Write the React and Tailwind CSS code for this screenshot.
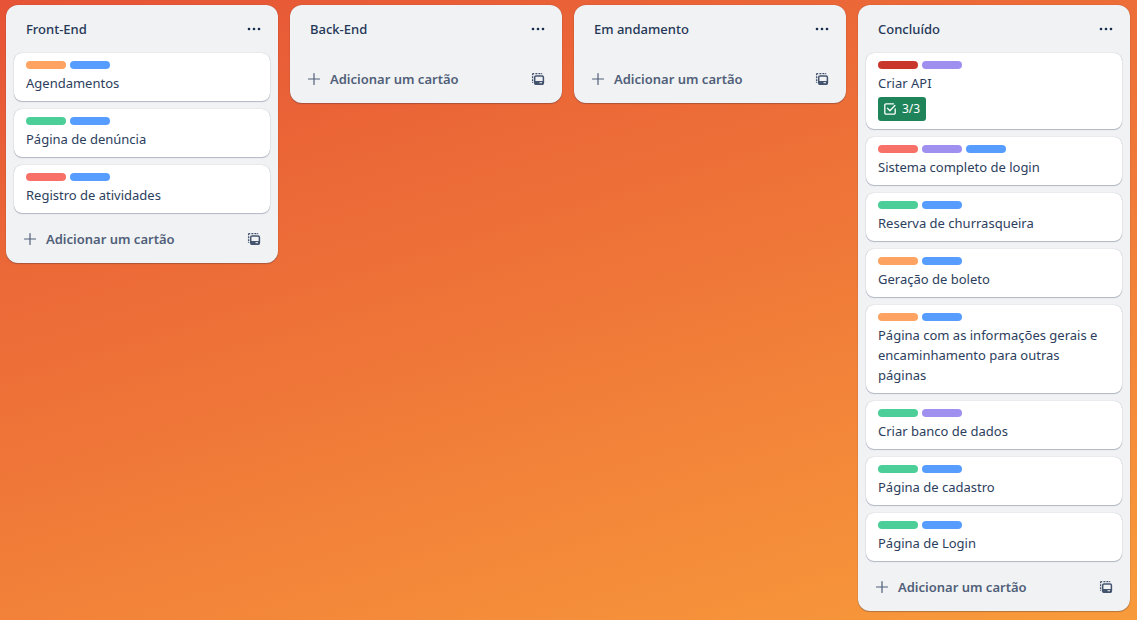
import React from "react";

const COLORS = {
  orange: "bg-[#fea362]",
  blue: "bg-[#579dff]",
  green: "bg-[#4bce97]",
  red: "bg-[#f87168]",
  darkRed: "bg-[#c9372c]",
  purple: "bg-[#9f8fef]",
};

const LISTS = [
  {
    title: "Front-End",
    cards: [
      { title: "Agendamentos", labels: ["orange", "blue"] },
      { title: "Página de denúncia", labels: ["green", "blue"] },
      { title: "Registro de atividades", labels: ["red", "blue"] },
    ],
  },
  { title: "Back-End", cards: [] },
  { title: "Em andamento", cards: [] },
  {
    title: "Concluído",
    cards: [
      { title: "Criar API", labels: ["darkRed", "purple"], checklist: "3/3" },
      { title: "Sistema completo de login", labels: ["red", "purple", "blue"] },
      { title: "Reserva de churrasqueira", labels: ["green", "blue"] },
      { title: "Geração de boleto", labels: ["orange", "blue"] },
      {
        title: "Página com as informações gerais e encaminhamento para outras páginas",
        labels: ["orange", "blue"],
      },
      { title: "Criar banco de dados", labels: ["green", "purple"] },
      { title: "Página de cadastro", labels: ["green", "blue"] },
      { title: "Página de Login", labels: ["green", "blue"] },
    ],
  },
];

function MoreIcon() {
  return (
    <svg className="size-4" viewBox="0 0 16 16" fill="currentColor" aria-hidden="true">
      <circle cx="3" cy="8" r="1.3" />
      <circle cx="8" cy="8" r="1.3" />
      <circle cx="13" cy="8" r="1.3" />
    </svg>
  );
}

function PlusIcon() {
  return (
    <svg className="size-4" viewBox="0 0 16 16" fill="none" stroke="currentColor" strokeWidth="1.2" strokeLinecap="round" aria-hidden="true">
      <path d="M8 2.5v11M2.5 8h11" />
    </svg>
  );
}

function TemplateIcon() {
  return (
    <svg className="size-4" viewBox="0 0 16 16" fill="none" stroke="currentColor" strokeWidth="1.3" aria-hidden="true">
      <path d="M2.6 4.2V3.3c0-.4.3-.7.7-.7h.9M5.4 2.6h2M8.4 2.6h2M11.200 2.6h1M2.6 5.2v2M2.6 8.200v2M2.6 11v.8" />
      <rect x="4.700" y="4.900" width="8.700" height="8.300" rx="1.300" strokeWidth="1.500" />
      <path fill="currentColor" stroke="none" d="M4.500 9.900h9v2.500a1 1 0 0 1-1 1h-7a1 1 0 0 1-1-1z" />
      <path d="M9.500 11.700h2.500" strokeWidth="1" stroke="#f1f2f4" />
    </svg>
  );
}

function ChecklistIcon() {
  return (
    <svg className="size-4" viewBox="0 0 16 16" fill="none" stroke="currentColor" strokeWidth="1.3" strokeLinecap="round" strokeLinejoin="round" aria-hidden="true">
      <path d="M11.5 2.800H4A1.200 1.200 0 0 0 2.800 4v8A1.200 1.200 0 0 0 4 13.200h8A1.200 1.200 0 0 0 13.200 12V8" />
      <path d="M5.500 7.300l2.400 2.400 5-5.200" />
    </svg>
  );
}

function Card({ card }) {
  return (
    <li className="rounded-lg bg-white px-3 py-2 shadow-[0_1px_1px_#091e4240,0_0_1px_#091e424f]">
      <div className="mb-1 flex gap-1">
        {card.labels.map((label) => (
          <span key={label} className={`h-2 w-10 rounded-sm ${COLORS[label]}`} />
        ))}
      </div>
      <p>{card.title}</p>
      {card.checklist && (
        <span className="mt-1 flex h-6 w-fit items-center gap-1 rounded-[3px] bg-[#1f845a] pr-1.5 pl-1 text-xs text-white">
          <ChecklistIcon />
          {card.checklist}
        </span>
      )}
    </li>
  );
}

function List({ list }) {
  return (
    <section className="w-68 shrink-0 rounded-xl bg-[#f1f2f4] px-2 pb-2 shadow-[0_1px_1px_#091e4240,0_0_1px_#091e424f]">
      <header className="flex h-12 items-center justify-between pl-3">
        <h2 className="font-medium text-[#243757]">{list.title}</h2>
        <button type="button" aria-label="Ações da lista" className="flex size-8 items-center justify-center rounded-lg">
          <MoreIcon />
        </button>
      </header>
      <ul className="flex flex-col gap-2 text-[#2c3e5d]">
        {list.cards.map((card) => (
          <Card key={card.title} card={card} />
        ))}
      </ul>
      <footer className="flex justify-between pt-2.5 text-[#44546f]">
        <button type="button" className="flex h-8 grow items-center gap-2 rounded-lg pl-2 font-semibold text-[#505f79]">
          <PlusIcon />
          Adicionar um cartão
        </button>
        <button type="button" aria-label="Criar a partir de modelo" className="flex size-8 items-center justify-center rounded-lg">
          <TemplateIcon />
        </button>
      </footer>
    </section>
  );
}

export default function App() {
  return (
    <main className="flex min-h-screen items-start gap-3 overflow-hidden bg-linear-163 from-[#e65336] via-[#ef7738] to-[#f89b3b] px-1.5 pt-[5px] pb-2 font-['Noto_Sans','Open_Sans',sans-serif] text-[13px] leading-5 text-[#172b4d]">
      {LISTS.map((list) => (
        <List key={list.title} list={list} />
      ))}
    </main>
  );
}
